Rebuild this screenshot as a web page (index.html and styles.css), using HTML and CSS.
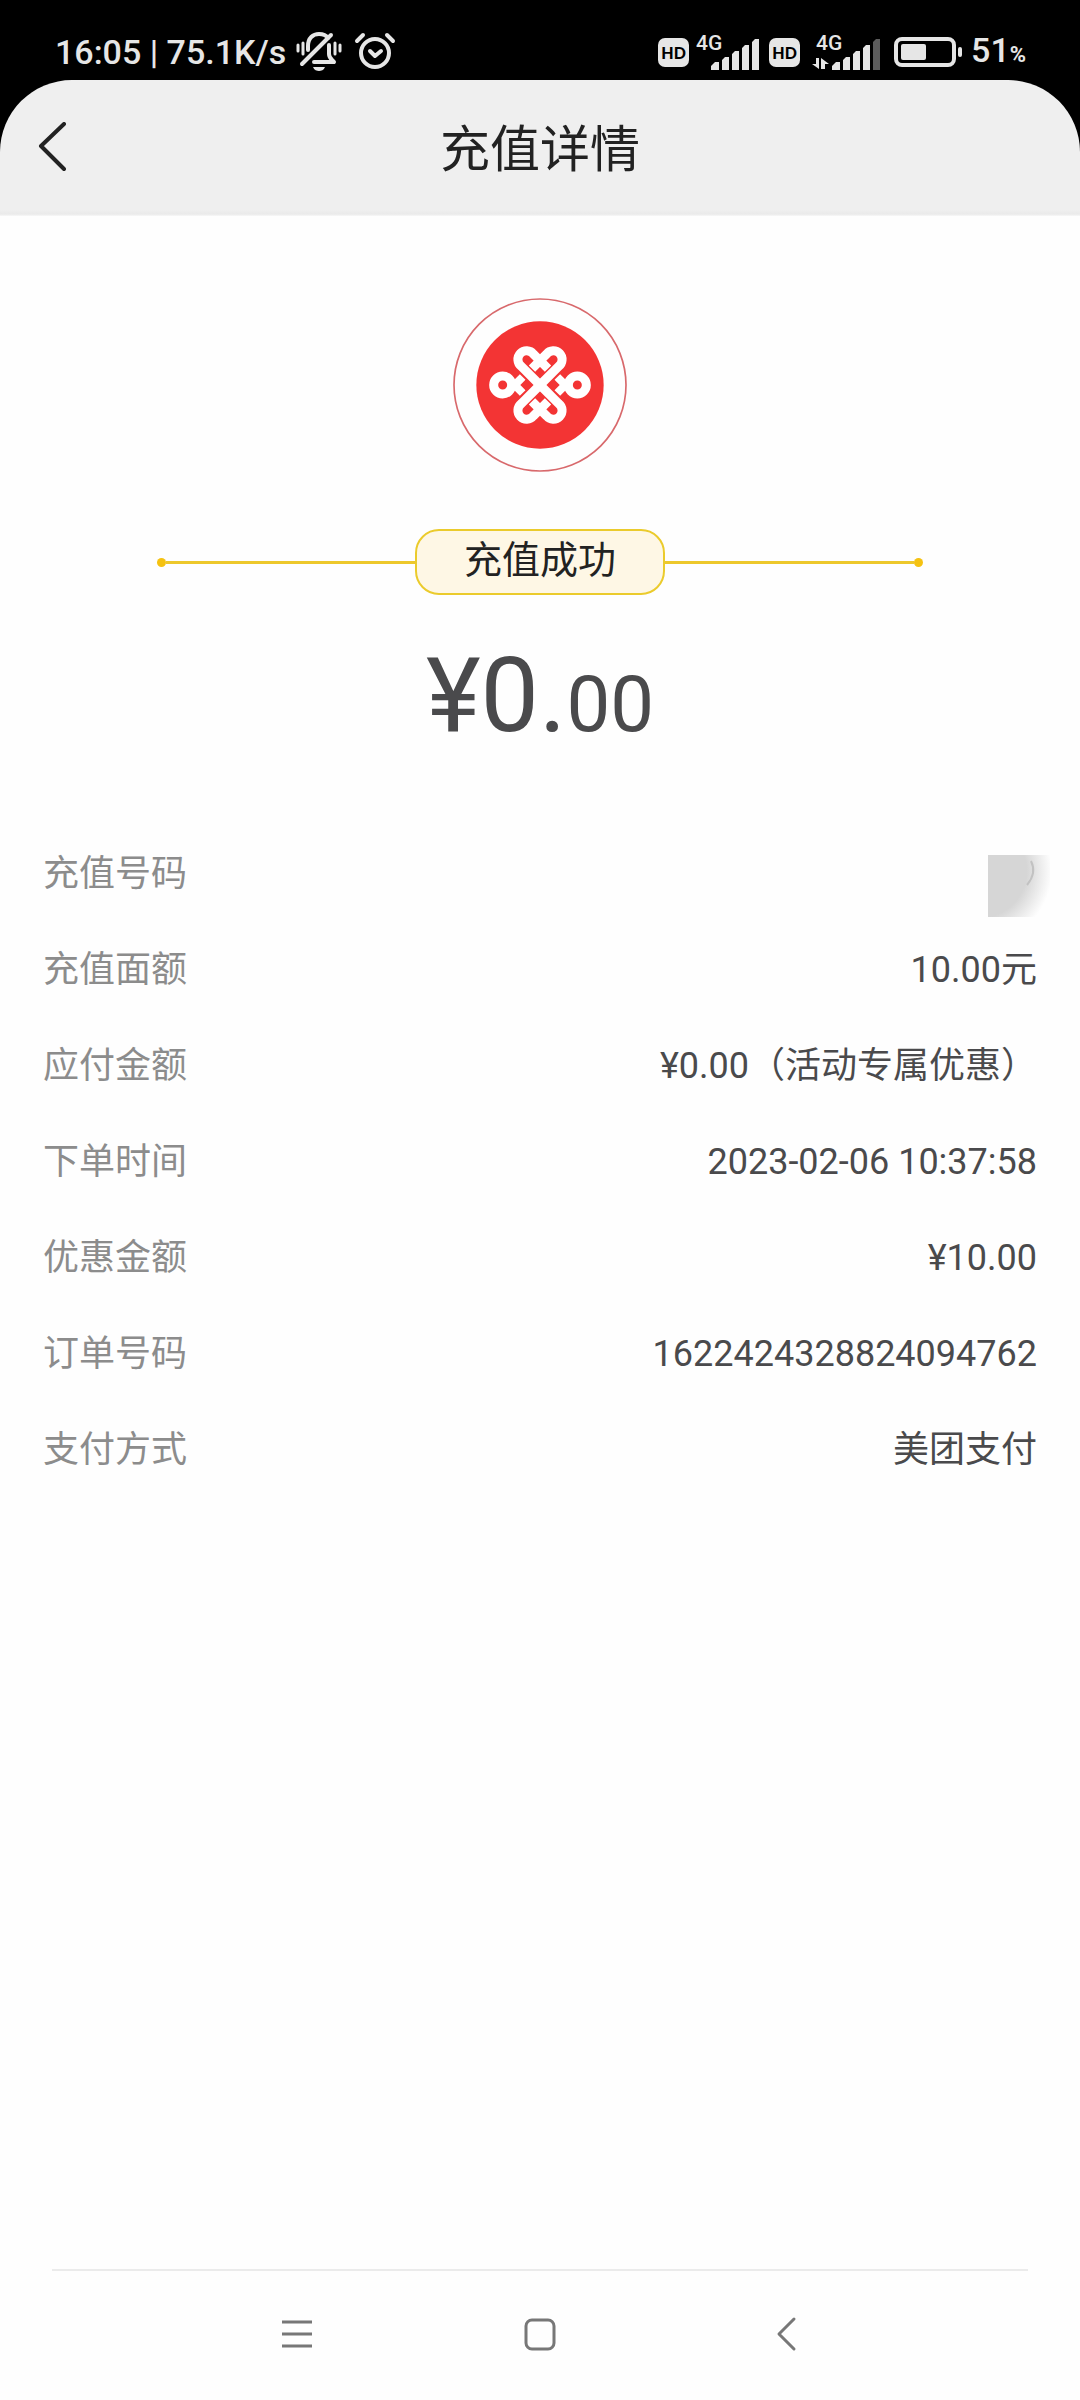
FILE: index.html
```html
<!DOCTYPE html>
<html lang="zh-CN">
<head>
<meta charset="utf-8">
<meta name="viewport" content="width=device-width, initial-scale=1">
<title>充值详情</title>
<link rel="stylesheet" href="styles.css">
</head>
<body>
<div class="top">
  <div class="status">
    <div class="status-group">
      <span class="status-text">16:05 | 75.1K/s</span>
      <svg class="bell" width="46" height="42" viewBox="0 0 46 42" fill="none" stroke="#e6e6e6" stroke-width="3" stroke-linecap="round" stroke-linejoin="round">
        <path d="M2 14v6M7 12v11M44 14v6M39 12v11"/>
        <path d="M12 19v-4C12 7 17 3 23 3c4 0 7 1 9 4" stroke-width="4"/>
        <path d="M33 14v9c0 4 2 5 5 8H18" stroke-width="4"/>
        <path d="M35 4L6 33" stroke-width="4"/>
        <path d="M17 36h12c-1 3-4 4-6 4s-5-1-6-4z" fill="#e6e6e6" stroke="none"/>
      </svg>
      <svg width="42" height="42" viewBox="0 0 42 42" fill="none" stroke="#e6e6e6" stroke-width="4" stroke-linecap="round" stroke-linejoin="round">
        <circle cx="21" cy="22" r="14"/>
        <path d="M3 10l6-6M39 10l-6-6M16 20l5 5 6-5" />
      </svg>
    </div>
    <div class="status-group status-right">
      <span class="hd">HD</span>
      <svg class="signal" width="66" height="58" viewBox="0 -8 66 58">
        <text x="0" y="19">4G</text>
        <g fill="#e6e6e6"><path d="M15 39v-4l4-4h4v8zM26 39V29l3-3h4v13zM36 39V23l3-3h4v19zM46 39V17l3-3h4v25zM56 39V11l3-3h4v31z"/></g>
      </svg>
      <span class="hd">HD</span>
      <svg class="signal" width="80" height="58" viewBox="-5 -8 80 58">
        <text x="4" y="19">4G</text>
        <g fill="#e6e6e6"><path d="M20 39v-4l4-4h4v8zM31 39V29l3-3h4v13zM41 39V23l3-3h4v19zM51 39V17l3-3h4v25z"/>
        <path d="M4 27h3v11L0 33h4zM9 38h4v-5h4L9 27z"/></g>
        <path d="M61 39V11l3-3h4v31z" fill="#5c5c5c"/>
      </svg>
      <svg class="battery" width="70" height="30" viewBox="0 0 70 30" fill="#e6e6e6">
        <rect x="2" y="2" width="58" height="26" rx="6" fill="none" stroke="#e6e6e6" stroke-width="4"/>
        <rect x="7" y="7" width="25" height="16" rx="2"/>
        <rect x="64" y="10" width="4" height="10" rx="2"/>
      </svg>
      <span class="status-text">51<small>%</small></span>
    </div>
  </div>
  <header class="header">
    <button class="back" type="button" aria-label="返回">
      <svg width="30" height="52" viewBox="0 0 30 52" fill="none" stroke="#222" stroke-width="4" stroke-linecap="round" stroke-linejoin="round"><path d="M26 2L3 24l23 23"/></svg>
    </button>
    <h1>充值详情</h1>
  </header>
</div>

<main>
  <svg class="logo" viewBox="-261 -261 522 522" fill="none">
    <circle r="258" stroke="#d8696c" stroke-width="5"/>
    <circle r="191" fill="#f33434"/>
    <g stroke="#fff" stroke-width="27">
      <path d="M0 0L-56-56A26 26 0 1 1-20-93L24-49"/>
      <path d="M0 0L56-56A26 26 0 1 0 20-93L-24-49"/>
      <path d="M0 0L-56 56A26 26 0 1 0-20 93L24 49"/>
      <path d="M0 0L56 56A26 26 0 1 1 20 93L-24 49"/>
      <circle cx="-112" r="27"/>
      <circle cx="112" r="27"/>
      <path d="M-52-24L-80 4M-52 24L-80-4M52-24L80 4M52 24L80-4" stroke-width="24"/>
    </g>
  </svg>
  <div class="result"><i class="dot"></i><i class="rule"></i><strong>充值成功</strong><i class="rule"></i><i class="dot"></i></div>
  <p class="amount">¥0.<small>00</small></p>
  <dl class="details">
    <div><dt>充值号码</dt><dd><svg class="mask" width="62" height="62" viewBox="0 0 62 62" fill="none" stroke="#c2c2c2" stroke-width="2"><path d="M43 6q6 12-4 24"/></svg></dd></div>
    <div><dt>充值面额</dt><dd>10.00元</dd></div>
    <div><dt>应付金额</dt><dd>¥0.00（活动专属优惠）</dd></div>
    <div><dt>下单时间</dt><dd>2023-02-06 10:37:58</dd></div>
    <div><dt>优惠金额</dt><dd>¥10.00</dd></div>
    <div><dt>订单号码</dt><dd>1622424328824094762</dd></div>
    <div><dt>支付方式</dt><dd>美团支付</dd></div>
  </dl>
</main>

<nav class="nav">
  <button type="button" aria-label="最近任务"><svg width="36" height="36" viewBox="0 0 36 36" stroke="#777" stroke-width="3"><path d="M3 6h30M3 18h30M3 30h30"/></svg></button>
  <button type="button" aria-label="主屏幕"><svg width="36" height="36" viewBox="0 0 36 36" fill="none" stroke="#777" stroke-width="3"><rect x="4" y="4" width="28" height="29" rx="6"/></svg></button>
  <button type="button" aria-label="返回"><svg width="36" height="36" viewBox="0 0 36 36" fill="none" stroke="#777" stroke-width="3" stroke-linecap="round" stroke-linejoin="round"><path d="M29 3L14 18l15 15"/></svg></button>
</nav>
</body>
</html>
```

FILE: styles.css
```css
* { box-sizing: border-box; }

body {
  margin: 0;
  min-height: 100vh;
  display: flex;
  flex-direction: column;
  background: #fefefe;
  color: #4a4a4c;
  font-family: Roboto, "Noto Sans CJK SC", sans-serif;
}

button {
  padding: 0;
  border: 0;
  background: none;
  display: flex;
  align-items: center;
  justify-content: center;
}

.top { background: #000; }

.status {
  height: 80px;
  padding: 24px 54px 0 55px;
  display: flex;
  justify-content: space-between;
  align-items: center;
  color: #e6e6e6;
}

.status-group {
  display: flex;
  align-items: center;
  gap: 12px;
}
.status-right { gap: 7px; }

.status-text {
  font-size: 34px;
  font-weight: 500;
  line-height: 42px;
  white-space: nowrap;
}
.status-text small { font-size: 22px; font-weight: 700; }
.bell { margin-left: -2px; }

.hd {
  width: 31px;
  height: 29px;
  border-radius: 7px;
  background: #e6e6e6;
  color: #000;
  font: 900 16px/30px Lato, sans-serif;
  text-align: center;
}

.signal text {
  fill: #e6e6e6;
  font: 500 21px Roboto, sans-serif;
}

.header {
  height: 136px;
  padding: 0 38px;
  display: grid;
  grid-template-columns: 30px 1fr 30px;
  align-items: center;
  background: linear-gradient(#efefef 130px, #eaeaea 134px, #f8f8f8);
  border-radius: 72px 72px 0 0;
}

.header h1 {
  margin: 0;
  padding-top: 4px;
  color: #222;
  font-size: 50px;
  font-weight: 400;
  line-height: 72px;
  text-align: center;
}

main {
  flex: 1;
  padding-top: 82px;
  display: flex;
  flex-direction: column;
  align-items: center;
}

.logo { width: 174px; height: 174px; }

.result {
  width: 71%;
  margin-top: 57px;
  display: flex;
  align-items: center;
}
.result strong {
  width: 250px;
  height: 66px;
  border: 2px solid #ebcb2c;
  border-radius: 24px;
  background: #fef7e5;
  color: #222;
  font-size: 38px;
  font-weight: 400;
  line-height: 58px;
  text-align: center;
}
.rule { flex: 1; height: 3px; background: #edc82c; }
.dot { width: 9px; height: 9px; border-radius: 50%; background: #f5c211; }

.amount {
  margin: 39px 0 0;
  font-size: 104px;
  line-height: 124px;
}
.amount small { font-size: 78px; }

.details {
  width: 100%;
  margin: 80px 0 0;
  padding: 0 43px;
  font-size: 36px;
  line-height: 54px;
}
.details div {
  height: 54px;
  margin-bottom: 42px;
  display: flex;
  justify-content: space-between;
}
.details dt { color: #8c8c8c; }
.details dd { margin: 0; }

.mask {
  display: block;
  margin: 8px -13px 0 0;
  background: radial-gradient(circle 72px at -8px 16px, #d6d6d6 65%, #fefefe 100%);
}

.nav {
  height: 131px;
  margin: 0 52px;
  padding: 0 174px 4px;
  display: flex;
  justify-content: space-between;
  align-items: center;
  border-top: 2px solid #ebebeb;
}
.nav button { width: 142px; height: 80px; }
```
